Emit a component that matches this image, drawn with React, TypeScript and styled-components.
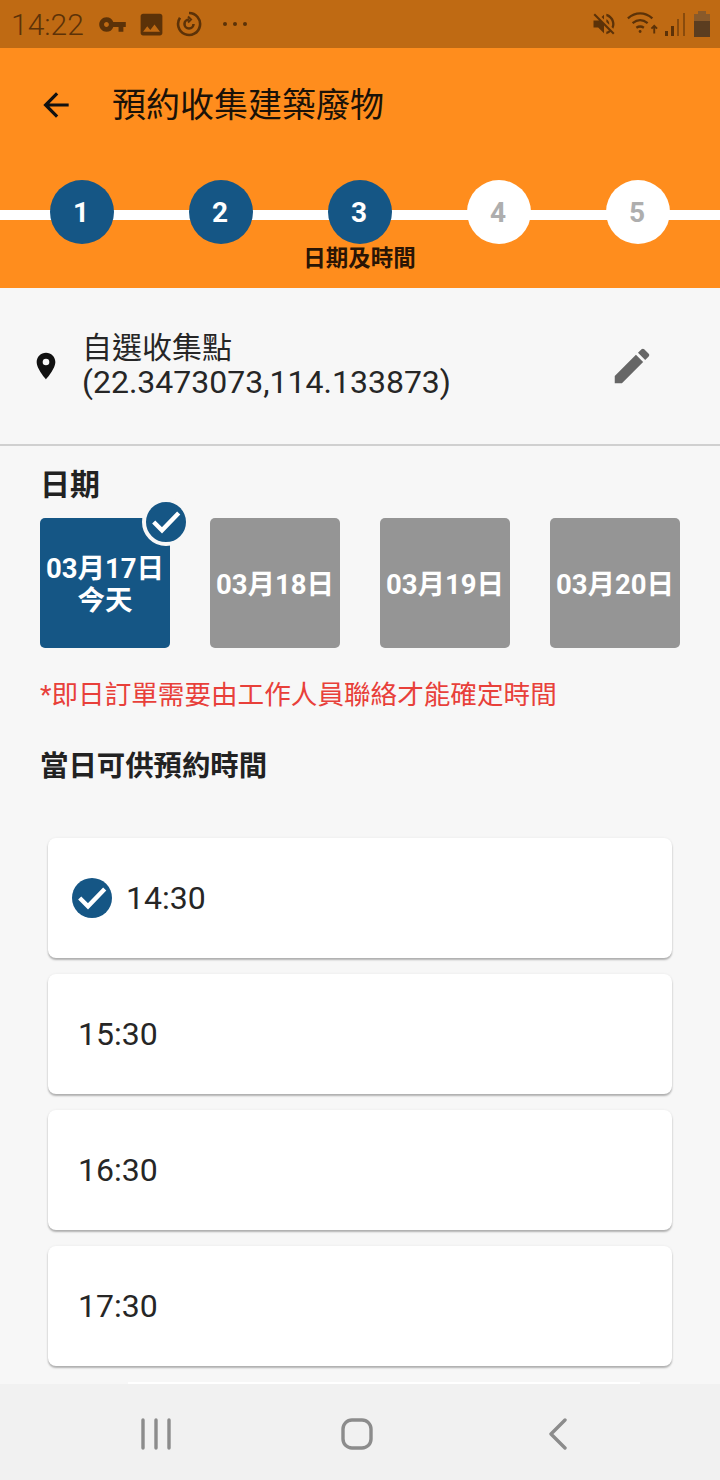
import React from 'react';
import styled, { createGlobalStyle } from 'styled-components';
import { MdArrowBack, MdEdit, MdLocationOn, MdPhoto, MdVpnKey, MdVolumeOff } from 'react-icons/md';

const FONT = 'Roboto, "Noto Sans CJK TC", sans-serif';
const BLUE = '#155685';

const GlobalStyle = createGlobalStyle`
  html, body {
    margin: 0;
    padding: 0;
    background: #f7f7f7;
    font-family: ${FONT};
  }
`;

const Screen = styled.div`
  width: 720px;
  height: 1480px;
  display: flex;
  flex-direction: column;
  overflow: hidden;
  background: #f7f7f7;
  color: #222;
`;

const StatusBar = styled.div`
  height: 48px;
  flex: none;
  display: flex;
  align-items: center;
  padding: 0 10px 0 11px;
  background: #bf6a13;
  color: #5c3208;
`;
const Clock = styled.span`
  font-size: 30px;
  font-weight: 300;
  width: 87px;
`;
const StatusLeft = styled.div`
  display: flex;
  align-items: center;
  gap: 10px;
  flex: 1;
`;
const StatusRight = styled.div`
  display: flex;
  align-items: center;
  gap: 6px;
`;
const Dots = styled.svg`
  margin-left: 10px;
`;
const MuteIcon = styled(MdVolumeOff)`
  margin-right: 2px;
`;

const Header = styled.header`
  height: 240px;
  flex: none;
  background: #ff8d1d;
  display: flex;
  flex-direction: column;
`;
const TitleRow = styled.div`
  height: 114px;
  display: flex;
  align-items: center;
  padding: 0 0 0 37px;
  gap: 37px;
  color: #111;
`;
const Title = styled.h1`
  margin: 0;
  font-size: 34px;
  font-weight: 400;
  line-height: 1;
  color: #1a1208;
`;
const Stepper = styled.div`
  position: relative;
  margin-top: 18px;
  display: grid;
  grid-template-columns: repeat(5, 139px);
  padding: 0 12px;
  &::before {
    content: '';
    position: absolute;
    left: 0;
    right: 0;
    top: 30px;
    height: 10px;
    background: #fff;
  }
`;
const Step = styled.div`
  position: relative;
  display: flex;
  flex-direction: column;
  align-items: center;
`;
const StepDot = styled.div<{ $done: boolean }>`
  width: 64px;
  height: 64px;
  border-radius: 50%;
  display: flex;
  align-items: center;
  justify-content: center;
  font-size: 28px;
  font-weight: 700;
  padding-right: 1px;
  box-sizing: border-box;
  background: ${p => (p.$done ? BLUE : '#fff')};
  color: ${p => (p.$done ? '#fff' : '#aeaeae')};
`;
const StepLabel = styled.div`
  font-size: 22.5px;
  font-weight: 700;
  line-height: 28px;
  color: #2a1505;
  white-space: nowrap;
`;

const LocationRow = styled.section`
  height: 158px;
  flex: none;
  display: flex;
  align-items: center;
  border-bottom: 2px solid #d0d0d0;
  padding: 0 65px 0 30px;
  box-sizing: border-box;
  color: #111;
`;
const LocationText = styled.div`
  flex: 1;
  margin: 0 0 2px 20px;
  font-size: 30px;
  line-height: 34px;
  color: #262626;
`;
const Coords = styled.span`
  font-size: 32px;
`;

const Body = styled.main`
  flex: 1;
  min-height: 0;
  overflow: hidden;
  padding: 21px 40px 0;
`;
const SectionTitle = styled.h2`
  margin: 0;
  font-size: 28.4px;
  font-weight: 700;
  line-height: 36px;
  color: #222;
`;
const DateTitle = styled(SectionTitle)`
  font-size: 30px;
`;
const DateRow = styled.div`
  display: flex;
  justify-content: space-between;
  margin-top: 15px;
`;
const DateCard = styled.div<{ $selected?: boolean }>`
  position: relative;
  width: 130px;
  height: 130px;
  padding-top: 3px;
  box-sizing: border-box;
  border-radius: 5px;
  display: flex;
  flex-direction: column;
  align-items: center;
  justify-content: center;
  font-size: 27.5px;
  font-weight: 700;
  line-height: 32px;
  color: #fff;
  white-space: nowrap;
  background: ${p => (p.$selected ? BLUE : '#959595')};
`;
const DateBadge = styled.div`
  position: absolute;
  top: -20px;
  right: -20px;
  width: 40px;
  height: 40px;
  box-sizing: content-box;
  border-radius: 50%;
  background: ${BLUE};
  border: 4px solid #f7f7f7;
  display: flex;
`;
const Notice = styled.p`
  margin: 29px 0 0;
  font-size: 26.6px;
  line-height: 36px;
  white-space: nowrap;
  color: #e8403a;
`;
const TimesTitle = styled(SectionTitle)`
  margin-top: 36px;
`;
const TimeList = styled.div`
  margin: 53px 8px 0;
  display: flex;
  flex-direction: column;
  gap: 16px;
`;
const TimeCard = styled.div<{ $selected?: boolean }>`
  height: 120px;
  flex: none;
  display: flex;
  align-items: center;
  gap: 14px;
  padding: 0 24px 0 ${p => (p.$selected ? 24 : 30)}px;
  background: #fff;
  border-radius: 8px;
  box-shadow: 0 2px 2px rgba(0, 0, 0, 0.28), 0 0 3px rgba(0, 0, 0, 0.06);
  font-size: 32px;
  color: #262626;
`;
const CheckDot = styled.div`
  width: 40px;
  height: 40px;
  border-radius: 50%;
  background: ${BLUE};
  display: flex;
`;

const NavBar = styled.nav`
  position: relative;
  height: 96px;
  flex: none;
  background: #f1f1f1;
  display: grid;
  grid-template-columns: repeat(3, 201px);
  justify-content: center;
  padding-right: 6px;
  &::before {
    content: '';
    position: absolute;
    left: 128px;
    right: 80px;
    top: -2px;
    height: 2px;
    background: #fff;
  }
`;
const NavItem = styled.div`
  display: flex;
  align-items: center;
  justify-content: center;
  padding-top: 4px;
`;

const Check = () => (
  <svg width="40" height="40" viewBox="0 0 40 40" fill="none" stroke="#fff" strokeWidth="4.4">
    <path d="M7.7 20L16 28.3 32.7 11" />
  </svg>
);

const StatusRing = () => (
  <svg width="26" height="26" viewBox="0 0 26 26" fill="none" stroke="#5c3208" strokeWidth="2.6">
    <path d="M13 2a11 11 0 1 1-9 4.8" />
    <path d="M17.5 13a4.5 4.5 0 1 1-4.5-4.5" />
    <path d="M12 5.5l3 3-3 3" strokeWidth="2" />
  </svg>
);

const StatusDots = () => (
  <Dots width="26" height="6" viewBox="0 0 26 6" fill="#5c3208">
    <circle cx="3" cy="3" r="2" />
    <circle cx="13" cy="3" r="2" />
    <circle cx="23" cy="3" r="2" />
  </Dots>
);

const Wifi = () => (
  <svg width="32" height="28" viewBox="0 0 34 28" fill="none" stroke="#5c3208" strokeWidth="2.4">
    <path d="M2 8c8-7 18-7 26 0" />
    <path d="M7 13c5-4 11-4 16 0" />
    <path d="M11 18c3-2 5-2 8 0" />
    <circle cx="15" cy="22" r="1.5" fill="#5c3208" stroke="none" />
    <path d="M30 24v-8M27 19l3-3 3 3" strokeWidth="2" />
  </svg>
);

const Signal = () => (
  <svg width="24" height="26" viewBox="0 0 24 26" fill="#5c3208">
    <rect x="1" y="20" width="3" height="5" />
    <rect x="7" y="15" width="3" height="10" />
    <rect x="13" y="8" width="2" height="17" opacity=".55" />
    <rect x="19" y="2" width="2" height="23" opacity=".55" />
  </svg>
);

const Battery = () => (
  <svg width="16" height="26" viewBox="0 0 16 26">
    <rect x="4" y="0" width="8" height="3" fill="#8a5a2a" />
    <rect x="0" y="3" width="16" height="7" fill="#8a5a2a" />
    <rect x="0" y="10" width="16" height="16" fill="#5b3d20" />
  </svg>
);

const RecentsIcon = () => (
  <svg width="30" height="32" viewBox="0 0 30 32" stroke="#8c8c8c" strokeWidth="3.4" strokeLinecap="round">
    <path d="M2 2v28M15 2v28M28 2v28" />
  </svg>
);
const HomeIcon = () => (
  <svg width="32" height="32" viewBox="0 0 32 32" fill="none" stroke="#8c8c8c" strokeWidth="3.4">
    <rect x="2" y="2" width="28" height="28" rx="9" />
  </svg>
);
const BackIcon = () => (
  <svg width="20" height="32" viewBox="0 0 20 32" fill="none" stroke="#8c8c8c" strokeWidth="3.4" strokeLinecap="round" strokeLinejoin="round">
    <path d="M17 2L3 16l14 14" />
  </svg>
);

const steps = [1, 2, 3, 4, 5];
const dates = ['03月18日', '03月19日', '03月20日'];
const times = ['15:30', '16:30', '17:30'];

export default function App() {
  return (
    <Screen>
      <GlobalStyle />
      <StatusBar>
        <Clock>14:22</Clock>
        <StatusLeft>
          <MdVpnKey size={29} />
          <MdPhoto size={29} />
          <StatusRing />
          <StatusDots />
        </StatusLeft>
        <StatusRight>
          <MuteIcon size={28} />
          <Wifi />
          <Signal />
          <Battery />
        </StatusRight>
      </StatusBar>

      <Header>
        <TitleRow>
          <MdArrowBack size={38} />
          <Title>預約收集建築廢物</Title>
        </TitleRow>
        <Stepper>
          {steps.map(n => (
            <Step key={n}>
              <StepDot $done={n <= 3}>{n}</StepDot>
              {n === 3 && <StepLabel>日期及時間</StepLabel>}
            </Step>
          ))}
        </Stepper>
      </Header>

      <LocationRow>
        <MdLocationOn size={32} />
        <LocationText>
          自選收集點
          <br />
          <Coords>(22.3473073,114.133873)</Coords>
        </LocationText>
        <MdEdit size={46} color="#666" />
      </LocationRow>

      <Body>
        <DateTitle>日期</DateTitle>
        <DateRow>
          <DateCard $selected>
            <span>03月17日</span>
            <span>今天</span>
            <DateBadge>
              <Check />
            </DateBadge>
          </DateCard>
          {dates.map(d => (
            <DateCard key={d}>{d}</DateCard>
          ))}
        </DateRow>
        <Notice>*即日訂單需要由工作人員聯絡才能確定時間</Notice>
        <TimesTitle>當日可供預約時間</TimesTitle>
        <TimeList>
          <TimeCard $selected>
            <CheckDot>
              <Check />
            </CheckDot>
            14:30
          </TimeCard>
          {times.map(t => (
            <TimeCard key={t}>{t}</TimeCard>
          ))}
        </TimeList>
      </Body>

      <NavBar>
        <NavItem>
          <RecentsIcon />
        </NavItem>
        <NavItem>
          <HomeIcon />
        </NavItem>
        <NavItem>
          <BackIcon />
        </NavItem>
      </NavBar>
    </Screen>
  );
}
